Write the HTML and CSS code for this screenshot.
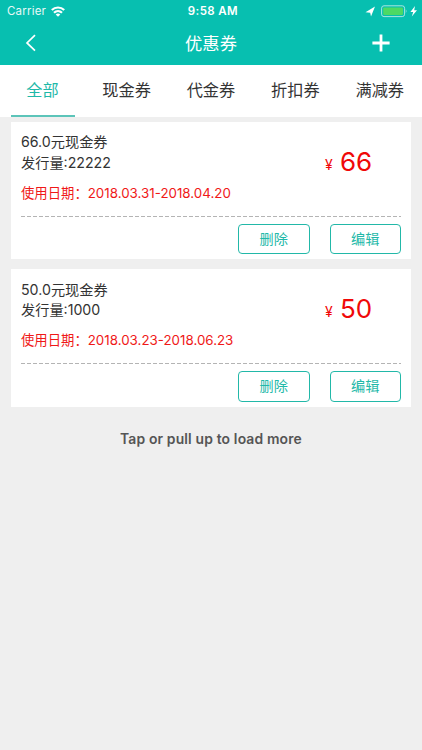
FILE: index.html
```html
<!DOCTYPE html>
<html lang="zh-CN">
<head>
<meta charset="utf-8">
<meta name="viewport" content="width=device-width">
<title>优惠券</title>
<link rel="stylesheet" href="styles.css">
</head>
<body>
<header class="top">
  <div class="status">
    <div class="carrier"><span class="carrier-name">Carrier</span>
      <svg width="14" height="11" viewBox="0 0 14 11" fill="none" stroke="#fff" stroke-width="2.2"><path d="M.8 4a9 9 0 0 1 12.4 0M3 6.8a5.8 5.8 0 0 1 8 0"/><path d="M4.7 8.5a3.4 3.4 0 0 1 4.6 0L7 10.8z" fill="#fff" stroke="none"/></svg>
    </div>
    <div class="time">9:58 AM</div>
    <div class="power">
      <svg width="54" height="13" viewBox="0 0 54 13"><path d="M.5 7.2 10 1.5 6 11.4 5.2 7.8z" fill="#fff"/><rect x="16.6" y=".8" width="23" height="10.8" rx="2.4" fill="none" stroke="#a9e6df"/><rect x="18.2" y="2.4" width="19.8" height="7.6" rx="1.2" fill="#4cd964"/><path d="M40.8 4.2q1.8 2 0 4z" fill="#a9e6df"/><path d="M50 .9 45.4 6.9h2.8l-1.4 4.7 5.2-6.3h-2.8z" fill="#fff"/></svg>
    </div>
  </div>
  <nav class="nav">
    <svg class="back" width="12" height="18" viewBox="0 0 12 18" fill="none" stroke="#fff" stroke-width="1.7"><path d="m10 1.2-8 7.7 8 7.7"/></svg>
    <h1 class="title">优惠券</h1>
    <svg class="add" width="18" height="18" viewBox="0 0 18 18" stroke="#fff" stroke-width="2.8"><path d="M9 .4v17.2M.4 9h17.2"/></svg>
  </nav>
</header>
<div class="tabs">
  <div class="tab active">全部</div>
  <div class="tab">现金券</div>
  <div class="tab">代金券</div>
  <div class="tab">折扣券</div>
  <div class="tab">满减券</div>
</div>
<main class="list">
  <article class="card">
    <div class="info">
      <div class="text">
        <p class="line">66.0元现金券</p>
        <p class="line">发行量:22222</p>
        <p class="date">使用日期：<span class="range">2018.03.31-2018.04.20</span></p>
      </div>
      <div class="price"><span class="yen">¥</span><span class="amount">66</span></div>
    </div>
    <svg class="dash" width="380" height="2"><path d="M0 .5h380" stroke="#b4b4b4" stroke-width="1" stroke-dasharray="4 2"/></svg>
    <div class="actions"><button class="btn">删除</button><button class="btn">编辑</button></div>
  </article>
  <article class="card">
    <div class="info">
      <div class="text">
        <p class="line">50.0元现金券</p>
        <p class="line">发行量:1000</p>
        <p class="date">使用日期：<span class="range">2018.03.23-2018.06.23</span></p>
      </div>
      <div class="price"><span class="yen">¥</span><span class="amount">50</span></div>
    </div>
    <svg class="dash" width="380" height="2"><path d="M0 .5h380" stroke="#b4b4b4" stroke-width="1" stroke-dasharray="4 2"/></svg>
    <div class="actions"><button class="btn">删除</button><button class="btn">编辑</button></div>
  </article>
</main>
<p class="more">Tap or pull up to load more</p>
</body>
</html>
```
FILE: styles.css
```css
* { box-sizing: border-box; }
body { margin: 0; height: 750px; overflow: hidden; background: #efefef; color: #333; font-family: Inter, "Noto Sans CJK SC", sans-serif; }
p, h1 { margin: 0; }
svg { display: block; }
.top { height: 65px; background: #07bfb0; color: #fff; }
.status { height: 22px; display: grid; grid-template-columns: 1fr auto 1fr; align-items: center; padding: 0 4px 0 7px; }
.carrier { display: flex; align-items: center; gap: 5px; font-size: 11.5px; }
.carrier-name { letter-spacing: .2px; opacity: .9; }
.time { margin-left: 1px; font-size: 11.5px; font-weight: 600; letter-spacing: .4px; }
.power { display: flex; justify-content: flex-end; margin-right: -1px; }
.nav { height: 43px; display: grid; grid-template-columns: 40px 1fr 40px; align-items: center; padding: 0 14px; }
.back { margin: -2px 0 0 11px; }
.title { text-align: center; font-size: 17.3px; font-weight: 400; line-height: 26px; }
.add { margin: -2px 0 0 4px; }
.tabs { height: 52px; background: #fff; display: grid; grid-template-columns: repeat(5, 84.4px); }
.tab { height: 52px; line-height: 50px; text-align: center; font-size: 16.2px; }
.active { color: #1fb9a9; margin: 0 9.4px 0 11px; padding-right: 1px; border-bottom: 2px solid #5cc4b9; }
.list { display: grid; gap: 10px; padding: 4.5px 11px 0; }
.card { height: 137.5px; background: #fff; padding: 10.5px 10px 0; }
.info { height: 83.5px; display: flex; justify-content: space-between; }
.line { height: 20.5px; line-height: 20.5px; font-size: 14.2px; white-space: nowrap; }
.date { margin-top: 9.5px; line-height: 20px; font-size: 13.35px; color: #f01818; white-space: nowrap; }
.range { letter-spacing: 0; }
.price { display: flex; align-items: flex-start; width: 76px; height: 40px; margin-top: 11.5px; color: #f00808; }
.yen { width: 15px; padding-top: 4px; font-size: 14px; line-height: 34px; }
.amount { font-size: 26px; line-height: 36px; }
.actions { display: flex; justify-content: flex-end; gap: 20px; padding-top: 6px; }
.btn { width: 71.5px; height: 30.5px; padding: 0; border: 1px solid #22b8a8; border-radius: 4px; background: #fff; color: #1fb9a9; font: 14.2px/28px Inter, "Noto Sans CJK SC", sans-serif; }
.more { margin-top: 22.5px; text-align: center; font-size: 13.9px; font-weight: 600; letter-spacing: .15px; line-height: 20px; color: #555; }
```
